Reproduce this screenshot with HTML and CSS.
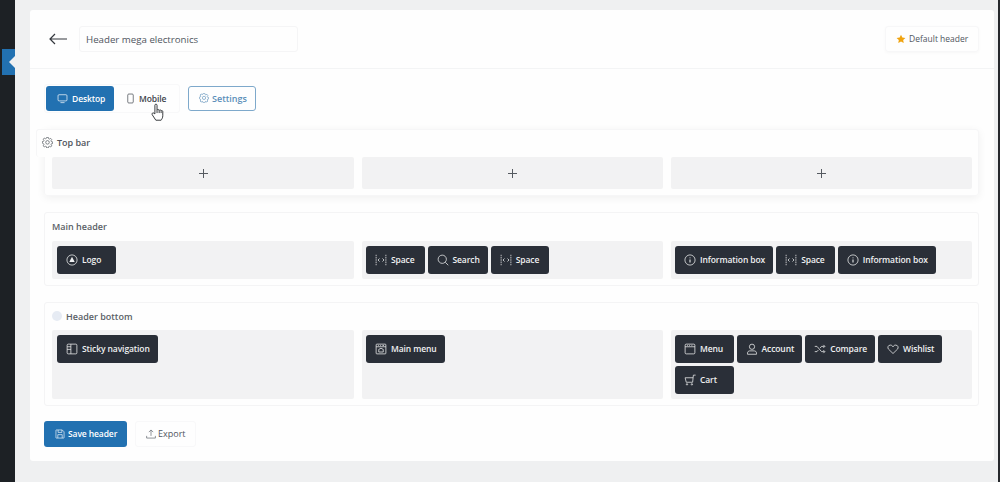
FILE: index.html
```html
<!DOCTYPE html>
<html lang="en">
<head>
    <meta charset="UTF-8">
    <meta name="viewport" content="width=device-width, initial-scale=1.0">
    <title>Header builder</title>
    <link rel="stylesheet" href="styles.css">
</head>
<body>
    <svg class="icon-defs" width="0" height="0">
        <symbol id="i-gear" viewBox="0 0 16 16"><path d="M6.800 .5h2.400l.4 1.900 1.300.6 1.700-1 1.600 1.800-1.100 1.600.5 1.300 1.900.4v2.400l-1.900.4-.5 1.300 1.100 1.600-1.600 1.700-1.700-1-1.300.5-.4 1.900H6.800l-.4-1.900-1.300-.5-1.700 1-1.600-1.700 1.100-1.600-.5-1.300L.5 9V6.600l1.900-.4.5-1.300-1.100-1.600 1.600-1.800 1.700 1 1.300-.6z"/><circle cx="8" cy="7.800" r="2.600"/></symbol>
        <symbol id="i-space" viewBox="0 0 16 16"><path d="M1.500 1v14M14.500 1v14" stroke-dasharray="2 1"/><path d="M6 6 4 8l2 2M10 6l2 2-2 2"/></symbol>
        <symbol id="i-info" viewBox="0 0 16 16"><circle cx="8" cy="8" r="6.800"/><path d="M8 7.200v4M8 4.600v1" stroke-width="1.400"/></symbol>
    </svg>

    <div class="sidebar">
        <span class="sidebar-tab"></span>
    </div>

    <div class="builder">
        <div class="builder-head">
            <svg class="back" viewBox="0 0 18 12"><path d="M18 6H1M6 1 1 6l5 5"/></svg>
            <div class="name-field">Header mega electronics</div>
            <div class="default-btn">
                <svg viewBox="0 0 12 12"><path d="M6 .8 7.600 4.200l3.700.5-2.700 2.500.7 3.700L6 9.100l-3.300 1.800.7-3.700L.7 4.700l3.700-.5z"/></svg>
                Default header
            </div>
        </div>

        <div class="builder-body">
            <div class="toolbar">
                <div class="tabs">
                    <div class="tab tab-active">
                        <svg viewBox="0 0 16 16"><rect x="1.500" y="2.500" width="13" height="9" rx="1.500"/><path d="M5 14h6"/></svg>
                        Desktop
                    </div>
                    <div class="tab tab-mobile">
                        <svg viewBox="0 0 16 16"><rect x="4" y="1.500" width="8" height="13" rx="1.500"/></svg>
                        Mobile
                    </div>
                    <svg class="hand" viewBox="0 0 14 20"><path d="M4.200 11.500V2.200c0-1.600 2.300-1.600 2.300 0v5.300c.3-1 2.200-1 2.300.3.300-.9 2-.9 2.100.4.400-.6 1.800-.4 1.800.8v4.500c0 2.200-1.200 3.800-1.800 4.800H5.200L1.300 12.400c-.9-1.200.7-2.600 1.800-1.700z"/><path d="M6.500 7.600v3M8.800 8v2.600M10.900 8.500v2.100" /></svg>
                </div>
                <div class="settings-btn">
                    <svg><use href="#i-gear"/></svg>
                    Settings
                </div>
            </div>

            <section class="panel panel-top">
                <div class="panel-title panel-title-out">
                    <svg><use href="#i-gear"/></svg>
                    Top bar
                </div>
                <div class="cols">
                    <div class="col col-add"><span class="plus"></span></div>
                    <div class="col col-add"><span class="plus"></span></div>
                    <div class="col col-add"><span class="plus"></span></div>
                </div>
            </section>

            <section class="panel">
                <div class="panel-title">Main header</div>
                <div class="cols">
                    <div class="col">
                        <div class="item">
                            <svg viewBox="0 0 16 16"><circle cx="8" cy="8" r="6.800"/><path d="M8 3.800 11.600 10.500H4.400z" class="fill"/></svg>
                            Logo
                        </div>
                    </div>
                    <div class="col">
                        <div class="item"><svg><use href="#i-space"/></svg>Space</div>
                        <div class="item">
                            <svg viewBox="0 0 16 16"><circle cx="7" cy="7" r="5.500"/><path d="m11 11 4 4"/></svg>
                            Search
                        </div>
                        <div class="item"><svg><use href="#i-space"/></svg>Space</div>
                    </div>
                    <div class="col">
                        <div class="item"><svg><use href="#i-info"/></svg>Information box</div>
                        <div class="item"><svg><use href="#i-space"/></svg>Space</div>
                        <div class="item"><svg><use href="#i-info"/></svg>Information box</div>
                    </div>
                </div>
            </section>

            <section class="panel panel-bottom">
                <div class="panel-title">
                    <span class="dot"></span>
                    Header bottom
                </div>
                <div class="cols cols-tall">
                    <div class="col">
                        <div class="item">
                            <svg viewBox="0 0 16 16"><rect x="1.500" y="1.500" width="13" height="13" rx="1.500"/><path d="M6.500 1.500v13M1.500 5h5M1.500 8.500h5"/></svg>
                            Sticky navigation
                        </div>
                    </div>
                    <div class="col">
                        <div class="item">
                            <svg viewBox="0 0 16 16"><rect x="1.500" y="1.500" width="13" height="13" rx="1"/><path d="M1.500 5h13M4 3.300h1M7 3.300h1M10 3.300h2M5 8.500l3-1.500 3 1.500v3.500H5z"/></svg>
                            Main menu
                        </div>
                    </div>
                    <div class="col">
                        <div class="item">
                            <svg viewBox="0 0 16 16"><rect x="1.500" y="1.500" width="13" height="13" rx="1.500"/><path d="M1.500 5h13M4 3.300h1M7 3.300h1M10 3.300h1"/></svg>
                            Menu
                        </div>
                        <div class="item">
                            <svg viewBox="0 0 16 16"><circle cx="8" cy="5" r="3.500"/><path d="M2 15v-1.500C2 11.500 3.500 10.500 5 10.500h6c1.500 0 3 1 3 3V15z"/></svg>
                            Account
                        </div>
                        <div class="item">
                            <svg viewBox="0 0 16 16"><path d="M1 4.500h3l6 7h4M1 11.500h3l1.800-2.200M8.200 6.700l1.800-2.200h4M12.500 2.500l2 2-2 2M12.500 9.500l2 2-2 2"/></svg>
                            Compare
                        </div>
                        <div class="item">
                            <svg viewBox="0 0 16 16"><path d="M8 14 2 8.200C.4 6.500 1 3 4.300 2.800 6 2.700 7.200 3.600 8 5c.8-1.400 2-2.300 3.700-2.200C15 3 15.600 6.500 14 8.200z"/></svg>
                            Wishlist
                        </div>
                        <div class="item">
                            <svg viewBox="0 0 16 16"><path d="M15.500 1.500h-3L11.500 11H3L1.500 5h10.500"/><circle cx="4" cy="13.800" r=".9"/><circle cx="10.500" cy="13.800" r=".9"/></svg>
                            Cart
                        </div>
                    </div>
                </div>
            </section>

            <div class="actions">
                <div class="save-btn">
                    <svg viewBox="0 0 16 16"><path d="M2 1.500h9.500L14.500 4.500V14a.5.500 0 0 1-.5.500H2a.5.500 0 0 1-.5-.500V2a.5.500 0 0 1 .5-.500z"/><path d="M5 1.500v4h6v-4M4.500 14.500V9h7v5.500"/></svg>
                    Save header
                </div>
                <div class="export-btn">
                    <svg viewBox="0 0 16 16"><path d="M8 11V2M4.500 5 8 1.500 11.500 5M1 11v3.500h14V11"/></svg>
                    Export
                </div>
            </div>
        </div>
    </div>
</body>
</html>
```

FILE: styles.css
```css
* {
    box-sizing: border-box;
}
html, body {
    height: 100%;
}
body {
    margin: 0;
    height: 482px;
    overflow: hidden;
    display: flex;
    align-items: flex-start;
    background: #eff0f1;
    border-right: 2px solid #26282c;
    font-family: "Open Sans", "Noto Sans", sans-serif;
    font-size: 9px;
    color: #50565e;
}
svg {
    fill: none;
    stroke: currentColor;
    stroke-width: 1;
    flex: none;
}
.icon-defs {
    position: absolute;
}
.sidebar {
    width: 15px;
    height: 482px;
    flex: none;
    padding-top: 49px;
    background: #1d2125;
}
.sidebar-tab {
    display: block;
    position: relative;
    width: 13px;
    height: 26px;
    margin-left: 2px;
    background: #2271b1;
}
.sidebar-tab::after {
    content: "";
    position: absolute;
    right: 0;
    top: 7px;
    border: 6px solid transparent;
    border-left: 0;
    border-right-color: #eff0f1;
}
.builder {
    width: 964px;
    height: 451px;
    margin: 10px 0 0 15px;
    background: #fefefe;
    border-radius: 3px;
}
.builder-head {
    height: 59px;
    padding: 16px 15px 0 19px;
    display: flex;
    align-items: flex-start;
    border-bottom: 1px solid #f3f4f5;
}
.back {
    width: 18px;
    height: 12px;
    margin: 7px 12px 0 0;
    color: #33373d;
    stroke-width: 1.2;
}
.name-field {
    width: 219px;
    height: 26px;
    padding-left: 6px;
    line-height: 26px;
    font-size: 9.7px;
    border: 1px solid #f5f5f6;
    border-radius: 3px;
}
.default-btn {
    margin-left: auto;
    width: 94px;
    height: 26px;
    display: flex;
    align-items: center;
    gap: 3px;
    padding: 0 0 1px 10px;
    font-size: 8.5px;
    border: 1px solid #f7f7f8;
    border-radius: 3px;
    box-shadow: 0 1px 3px rgba(0,0,0,0.03);
}
.default-btn svg {
    width: 10px;
    height: 10px;
    fill: #f0a30f;
    stroke: none;
}
.builder-body {
    padding: 15px 15px 0 14px;
}
.toolbar {
    display: flex;
    align-items: center;
    gap: 8px;
    margin-bottom: 16px;
}
.tabs {
    position: relative;
    width: 136px;
    height: 29px;
    padding: 1px;
    display: flex;
    border: 1px solid #f8f8f9;
    border-radius: 3px;
}
.tab {
    height: 25px;
    flex: none;
    display: flex;
    align-items: center;
    gap: 4px;
    padding: 0 0 1px 11px;
    width: 68px;
    font-size: 8.5px;
    letter-spacing: -0.1px;
    font-weight: 600;
    color: #3d434a;
    border-radius: 3px;
}
.tab svg {
    width: 11px;
    height: 11px;
}
.tab-active {
    background: #2271b1;
    color: #fff;
}
.tab-mobile {
    width: 64px;
    padding-left: 11px;
    gap: 3px;
}
.hand {
    position: absolute;
    left: 106px;
    top: 18px;
    width: 13px;
    height: 19px;
    fill: #fff;
    stroke: #2a2d31;
}
.settings-btn {
    width: 68px;
    height: 25px;
    display: flex;
    align-items: center;
    gap: 3px;
    padding: 0 0 1px 10px;
    font-weight: 600;
    color: #5b8fb9;
    border: 1px solid #7ea9cb;
    border-radius: 3px;
}
.settings-btn svg {
    width: 10px;
    height: 10px;
}
.panel {
    margin-bottom: 16px;
    padding: 7px 7px 6px;
    border: 1px solid #f4f4f5;
    border-radius: 3px;
}
.panel-top {
    position: relative;
    padding-top: 27px;
    margin-bottom: 16px;
    border-color: #f6f6f7;
    box-shadow: 0 2px 8px rgba(0,0,0,0.06);
}
.panel-bottom .panel-title {
    margin-bottom: 6px;
}
.panel-bottom {
    margin-bottom: 15px;
}
.panel-title {
    height: 14px;
    display: flex;
    align-items: center;
    gap: 3px;
    margin-bottom: 7px;
    padding-bottom: 2px;
    font-weight: 600;
    color: #5a5f66;
}
.panel-title-out {
    position: absolute;
    left: -9px;
    top: -1px;
    width: 80px;
    height: 28px;
    padding-left: 5px;
    background: #fefefe;
    border: 1px solid #f6f6f7;
    border-right: 0;
    border-bottom: 0;
    border-radius: 3px 0 0 3px;
    color: #4f545b;
}
.panel-title-out svg {
    width: 11px;
    height: 11px;
    margin-right: 1px;
}
.dot {
    width: 10px;
    height: 10px;
    margin-right: 1px;
    border-radius: 50%;
    background: #e6ebf3;
}
.cols {
    display: grid;
    grid-template-columns: 302px 301px 301px;
    gap: 8px;
}
.col {
    min-height: 38px;
    padding: 5px;
    display: flex;
    flex-wrap: wrap;
    align-content: flex-start;
    gap: 3px;
    background: #f2f2f3;
    border-radius: 2px;
}
.col + .col {
    padding-left: 4px;
}
.col-add,
.col-add + .col-add {
    min-height: 32px;
    padding: 5px;
    align-items: center;
    justify-content: center;
    align-content: center;
}
.cols-tall .col {
    min-height: 69px;
}
.plus {
    position: relative;
    width: 9px;
    height: 9px;
}
.plus::before,
.plus::after {
    content: "";
    position: absolute;
    background: #555a60;
}
.plus::before {
    left: 0;
    right: 0;
    top: 4px;
    height: 1px;
}
.plus::after {
    top: 0;
    bottom: 0;
    left: 4px;
    width: 1px;
}
.item {
    height: 28px;
    min-width: 58.5px;
    display: flex;
    align-items: center;
    gap: 4px;
    padding: 0 8px 2px 9px;
    font-size: 8.5px;
    letter-spacing: -0.1px;
    font-weight: 600;
    color: #f0f1f2;
    background: #2a2f38;
    border-radius: 3px;
}
.item svg {
    width: 12px;
    height: 12px;
    margin-top: 2px;
}
.item .fill {
    fill: currentColor;
    stroke: none;
}
.actions {
    display: flex;
    gap: 8px;
}
.save-btn,
.export-btn {
    height: 26px;
    display: flex;
    align-items: center;
    gap: 3px;
    padding-bottom: 2px;
    border-radius: 3px;
}
.save-btn {
    width: 83px;
    padding-left: 11px;
    font-size: 8.5px;
    letter-spacing: -0.1px;
    font-weight: 600;
    color: #fff;
    background: #2271b1;
}
.export-btn {
    width: 61px;
    padding-left: 10px;
    gap: 2px;
    border: 1px solid #f8f8f9;
}
.save-btn svg,
.export-btn svg {
    width: 10px;
    height: 10px;
    margin-top: 2px;
}
```
